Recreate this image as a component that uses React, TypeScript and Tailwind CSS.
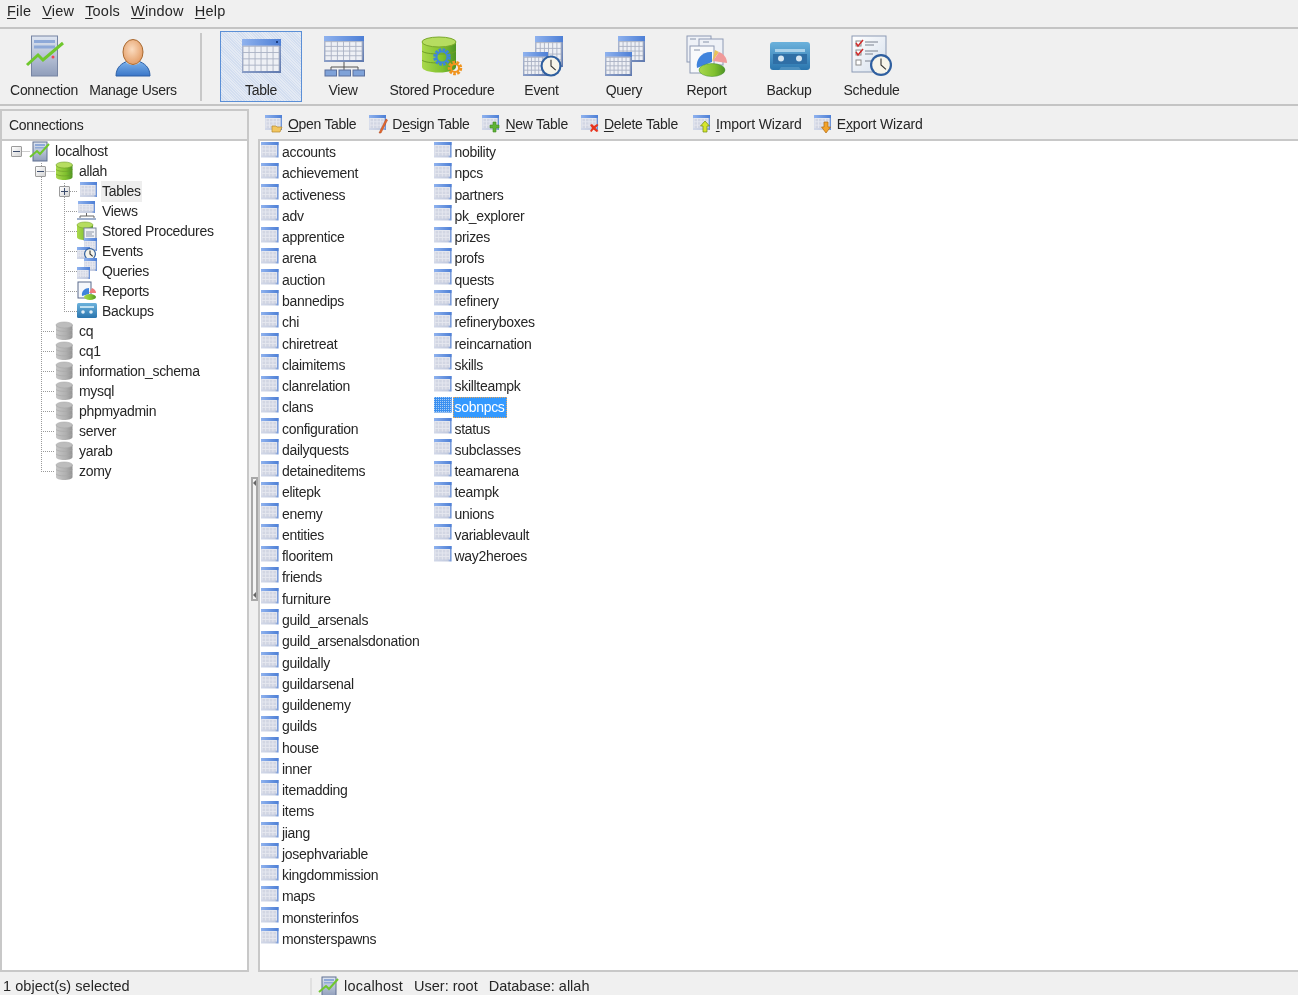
import React from "react";

const col1 = ["accounts","achievement","activeness","adv","apprentice","arena","auction","bannedips","chi","chiretreat","claimitems","clanrelation","clans","configuration","dailyquests","detaineditems","elitepk","enemy","entities","flooritem","friends","furniture","guild_arsenals","guild_arsenalsdonation","guildally","guildarsenal","guildenemy","guilds","house","inner","itemadding","items","jiang","josephvariable","kingdommission","maps","monsterinfos","monsterspawns"];
const col2 = ["nobility","npcs","partners","pk_explorer","prizes","profs","quests","refinery","refineryboxes","reincarnation","skills","skillteampk","sobnpcs","status","subclasses","teamarena","teampk","unions","variablevault","way2heroes"];

function Tbl({ x, y, w, h, light }: { x: number; y: number; w: number; h: number; light?: boolean }) {
  const head = Math.max(3, h * 0.2);
  const cols = light ? 4 : 6;
  const rows = light ? 3 : 4;
  const gx = (w - 3) / cols;
  const gy = (h - head - 2) / rows;
  const line = light ? "#e6e8f0" : "#aab1c4";
  return (
    <g>
      <rect x={x} y={y} width={w} height={h} fill={light ? "url(#edgeLight)" : "url(#edge)"} />
      <rect x={x} y={y} width={w} height={head} fill="url(#hdr)" />
      <rect x={x + 1} y={y + head} width={w - 3} height={h - head - 2} fill={light ? "#d2d6e3" : "#eef0f5"} />
      {Array.from({ length: cols + 1 }).map((_, i) => (
        <rect key={"c" + i} x={x + 1 + i * gx - 0.4} y={y + head} width={0.9} height={h - head - 2} fill={line} />
      ))}
      {Array.from({ length: rows }).map((_, i) => (
        <rect key={"r" + i} x={x + 1} y={y + head + i * gy} width={w - 3} height={0.9} fill={line} />
      ))}
    </g>
  );
}

function Clock({ cx, cy, r }: { cx: number; cy: number; r: number }) {
  return (
    <g>
      <circle cx={cx} cy={cy} r={r} fill="#2f5f9f" />
      <circle cx={cx} cy={cy} r={r * 0.8} fill="#f6f4ea" />
      <path d={`M${cx} ${cy - r * 0.6}V${cy}L${cx + r * 0.45} ${cy + r * 0.4}`} stroke="#333" strokeWidth={1.1} fill="none" />
    </g>
  );
}

function Chart({ d, w }: { d: string; w: number }) {
  return <path d={d} fill="none" stroke="#6fc72d" strokeWidth={w} strokeLinejoin="miter" />;
}

function ConnectionBig() {
  return (
    <svg width="44" height="44" viewBox="0 0 44 44">
      <rect x="9.500" y="1" width="26" height="40" fill="url(#tower)" stroke="#7684a2" />
      <rect x="12" y="5" width="21" height="3" fill="#8ea9d8" />
      <rect x="12" y="10.500" width="21" height="3" fill="#8ea9d8" />
      <circle cx="31" cy="22" r="1.500" fill="#ef4455" />
      <Chart d="M5 30L16 20L21 25L41 8" w={3} />
    </svg>
  );
}
function UserBig() {
  return (
    <svg width="44" height="44" viewBox="0 0 44 44">
      <path d="M5 41c0-9 6-13 12-15h10c6 2 12 6 12 15z" fill="url(#blue)" stroke="#2c5fa5" />
      <path d="M15 27c3 4 11 4 14 0l-2-2H17z" fill="#eef0f3" />
      <ellipse cx="22" cy="17" rx="10" ry="12.500" fill="url(#skin)" stroke="#a8682e" />
    </svg>
  );
}
function TableBig() {
  return (
    <svg width="44" height="44" viewBox="0 0 44 44">
      <Tbl x={3} y={4} w={39} h={34} />
      <rect x="37" y="6" width="2" height="2" fill="#1f3f7f" />
    </svg>
  );
}
function ViewBig() {
  return (
    <svg width="44" height="44" viewBox="0 0 44 44">
      <Tbl x={3} y={1} w={40} h={26} />
      <path d="M23 27V32M10 36V32H37V36M23 32V36" stroke="#555" fill="none" />
      {[4, 18, 32].map((x) => (
        <rect key={x} x={x} y={35} width={11.500} height={6} fill="#7fa2d8" stroke="#5a6f9c" />
      ))}
    </svg>
  );
}
function StoredBig() {
  return (
    <svg width="44" height="44" viewBox="0 0 44 44">
      <path d="M2 7v25c0 3 7 5.500 17 5.500s17-2.500 17-5.500V7z" fill="url(#green)" />
      <ellipse cx="19" cy="7" rx="17" ry="5" fill="#b6dd60" stroke="#7aa82c" />
      <path d="M2 16c3 4 31 4 34 0M2 25c3 4 31 4 34 0" stroke="#6f9f28" fill="none" />
      <circle cx="22" cy="22" r="7" fill="none" stroke="#3f86d8" strokeWidth="3.500" strokeDasharray="2.500 1.200" />
      <circle cx="22" cy="22" r="5.500" fill="none" stroke="#3f86d8" strokeWidth="2" />
      <circle cx="35" cy="33" r="5.500" fill="none" stroke="#f0941f" strokeWidth="3.500" strokeDasharray="2.500 1.300" />
      <circle cx="35" cy="33" r="4" fill="none" stroke="#f0941f" strokeWidth="2" />
    </svg>
  );
}
function EventBig() {
  return (
    <svg width="44" height="44" viewBox="0 0 44 44">
      <Tbl x={15} y={1} w={28} h={31} />
      <Tbl x={3} y={17} w={25} h={24} />
      <Clock cx={31} cy={31} r={10.500} />
    </svg>
  );
}
function QueryBig() {
  return (
    <svg width="44" height="44" viewBox="0 0 44 44">
      <Tbl x={16} y={1} w={27} h={26} />
      <Tbl x={3} y={17} w={27} h={24} />
    </svg>
  );
}
function ReportBig() {
  return (
    <svg width="44" height="44" viewBox="0 0 44 44">
      <rect x="2" y="1" width="24" height="26" fill="#eef1f7" stroke="#8e9ab4" />
      <rect x="14" y="4" width="24" height="26" fill="#eef1f7" stroke="#8e9ab4" />
      <rect x="5" y="11" width="24" height="27" fill="#f8f9fb" stroke="#8e9ab4" />
      <path d="M9 15h6M18 7h6M5 4h6" stroke="#8894aa" />
      <path d="M27 27L12 33c-2-9 6-17 15-16z" fill="#3f83dc" />
      <path d="M27 27L30 15l4 2z" fill="#e8c25a" />
      <path d="M28 26L34 17c5 2 8 6 8 11z" fill="#f09a9a" />
      <ellipse cx="27" cy="35" rx="13" ry="6.500" fill="url(#green)" stroke="#3e8d2b" strokeWidth="0.500" />
    </svg>
  );
}
function BackupBig() {
  return (
    <svg width="44" height="44" viewBox="0 0 44 44">
      <rect x="3" y="7" width="40" height="28" rx="3" fill="url(#tape)" />
      <rect x="8" y="14" width="30" height="3" fill="#a9d1ea" />
      <rect x="6" y="19" width="34" height="10" fill="#2f6fa6" />
      <circle cx="14" cy="23.500" r="3" fill="#d6e6f2" />
      <circle cx="32" cy="23.500" r="3" fill="#d6e6f2" />
      <path d="M12 35l2-3h18l2 3z" fill="#4d90bf" />
    </svg>
  );
}
function ScheduleBig() {
  return (
    <svg width="44" height="44" viewBox="0 0 44 44">
      <rect x="2" y="1" width="34" height="36" fill="url(#paper)" stroke="#8b9ab4" />
      <rect x="6" y="6" width="5" height="5" fill="#fff" stroke="#8c8c8c" />
      <rect x="6" y="15" width="5" height="5" fill="#fff" stroke="#8c8c8c" />
      <rect x="6" y="25" width="5" height="5" fill="#fff" stroke="#8c8c8c" />
      <path d="M6 8l2 3 5-6M6 17l2 3 5-6" stroke="#d12b2b" strokeWidth="1.500" fill="none" />
      <path d="M15 7h13M15 10h9M15 16h13M15 19h8M15 26h6" stroke="#7a8290" />
      <Clock cx={31} cy={30} r={11} />
    </svg>
  );
}

function SmallTable({ selected }: { selected?: boolean }) {
  return (
    <svg width="18" height="17" viewBox="0 0 18 17" className="shrink-0">
      <Tbl x={0} y={0} w={17.500} h={15.500} light />
      {selected && <rect x={0} y={0} width={17.500} height={15.500} fill="url(#dither)" />}
    </svg>
  );
}

function ActionIcon({ kind }: { kind: string }) {
  return (
    <svg width="19" height="20" viewBox="0 0 19 20" className="shrink-0">
      <Tbl x={0} y={1} w={17} h={15} light />
      {kind === "open" && <path d="M7 18v-6h4l1 1h5l-2 5z" fill="#f2c660" stroke="#b4862c" strokeWidth="0.700" />}
      {kind === "design" && <path d="M10 19L17 5l1.500 1L12 19z" fill="#ea6b2c" stroke="#a83d14" strokeWidth="0.500" />}
      {kind === "new" && <path d="M11 8h3v3h3v3h-3v4h-3v-4H8v-3h3z" fill="#5fb336" stroke="#3f8a22" strokeWidth="0.600" />}
      {kind === "delete" && <path d="M9 11l2-1 2 2 3-2 1.500 1-3 3 3 3-2 1-3-2.500-2 2.500-1.500-1 2-3z" fill="#e8341e" />}
      {kind === "import" && <path d="M12 7l4.500 5H14v6h-4v-6H7.500z" fill="#d7e62e" stroke="#6d8a12" strokeWidth="0.700" />}
      {kind === "export" && <path d="M7.500 13H10V8h4v5h2.500L12 19z" fill="#f2a32a" stroke="#b06a12" strokeWidth="0.700" />}
    </svg>
  );
}

function SmallConn() {
  return (
    <svg width="21" height="21" viewBox="0 0 21 21" className="shrink-0">
      <rect x="4" y="1" width="14" height="19" fill="url(#tower)" stroke="#5f6f90" />
      <rect x="6" y="3" width="10" height="2" fill="#8ea9d8" />
      <rect x="6" y="6" width="10" height="1.500" fill="#8ea9d8" />
      <Chart d="M1 16L8 10L11 13L20 3" w={2} />
    </svg>
  );
}
function Db({ grey }: { grey?: boolean }) {
  const fill = grey ? "url(#grey)" : "url(#green)";
  const top = grey ? "#bdbdbd" : "#b6dd60";
  const line = grey ? "#a8a8a8" : "#6f9f28";
  return (
    <svg width="19" height="20" viewBox="0 0 19 20" className="shrink-0">
      <path d="M1 4v12c0 2 3.500 3 8 3s8.500-1 8.500-3V4z" fill={fill} />
      <ellipse cx="9.250" cy="4" rx="8.250" ry="3" fill={top} stroke={line} strokeWidth="0.600" />
      <path d="M1 8.500c2 2.500 14.500 2.500 16.500 0M1 13c2 2.500 14.500 2.500 16.500 0" stroke={line} fill="none" strokeWidth="0.700" />
    </svg>
  );
}
function TreeIcon({ kind }: { kind: string }) {
  return (
    <svg width="20" height="20" viewBox="0 0 20 20" className="shrink-0 overflow-visible">
      {kind === "tables" && <Tbl x={1} y={1} w={17} h={15} light />}
      {kind === "views" && (
        <g>
          <Tbl x={1} y={0} w={17} h={12} light />
          <path d="M9.500 12v3M3 18v-3h14v3" stroke="#666" fill="none" />
          <rect x="0" y="17" width="19" height="2" fill="#9fb0cc" />
        </g>
      )}
      {kind === "procs" && (
        <g>
          <path d="M0 4v12c0 2 3 3 8 3s8-1 8-3V4z" fill="url(#green)" />
          <ellipse cx="8" cy="4" rx="8" ry="3" fill="#b6dd60" stroke="#7aa82c" strokeWidth="0.600" />
          <rect x="7" y="7" width="12" height="12" fill="#f0f2f6" stroke="#7b869c" />
          <path d="M9 11h8M9 13h6M9 15h8" stroke="#9099a8" />
        </g>
      )}
      {kind === "events" && (
        <g>
          <Tbl x={7} y={-3} w={13} h={13} light />
          <Tbl x={0} y={6} w={13} h={12} light />
          <Clock cx={13} cy={13} r={6} />
        </g>
      )}
      {kind === "queries" && (
        <g>
          <Tbl x={7} y={-3} w={13} h={13} light />
          <Tbl x={0} y={6} w={13} h={12} light />
        </g>
      )}
      {kind === "reports" && (
        <g>
          <rect x="1" y="1" width="13" height="16" fill="#f5f7fb" stroke="#5a6b8c" />
          <path d="M12 13L5 15c-1-5 3-8 7-8z" fill="#3f83dc" />
          <path d="M12 12l3-5c3 1 4 3 4 5z" fill="#ef7b7b" />
          <ellipse cx="13" cy="16" rx="6" ry="3" fill="url(#green)" />
        </g>
      )}
      {kind === "backups" && (
        <g>
          <rect x="0" y="2" width="20" height="15" rx="1.500" fill="url(#tape)" />
          <rect x="3" y="5" width="14" height="2" fill="#bfe0f2" />
          <circle cx="6" cy="11" r="1.800" fill="#e0eef7" />
          <circle cx="14" cy="11" r="1.800" fill="#e0eef7" />
        </g>
      )}
    </svg>
  );
}

function Expander({ open }: { open?: boolean }) {
  return (
    <span className="relative flex h-[11px] w-[11px] shrink-0 items-center justify-center rounded-[1px] border border-[#9b9b9b] bg-gradient-to-br from-white to-[#d5d5d5]">
      <span className="h-px w-[7px] bg-[#3c4c6c]" />
      {!open && <span className="absolute h-[7px] w-px bg-[#3c4c6c]" />}
    </span>
  );
}

function TreeGuides() {
  const h1 = [331, 351, 371, 391, 411, 431, 451, 471];
  const h2 = [191, 211, 231, 251, 271, 291, 311];
  const st = { stroke: "#9a9a9a", strokeDasharray: "1 1", fill: "none" };
  return (
    <svg className="pointer-events-none absolute left-0 top-0" width="100" height="480" viewBox="2 141 100 480">
      <path d="M22.500 151.500H30M46.500 171.500H55M41.500 163V471.500" {...st} />
      <path d="M64.500 183V311.500" {...st} />
      {h1.map((y) => <path key={y} d={`M41 ${y + 0.5}H55`} {...st} />)}
      {h2.map((y) => <path key={y} d={`M${y === 191 ? 70 : 64} ${y + 0.5}H78`} {...st} />)}
    </svg>
  );
}

function Mn({ pre = "", u, post }: { pre?: string; u: string; post: string }) {
  return <span>{pre}<span className="underline underline-offset-[2px] decoration-1">{u}</span>{post}</span>;
}

function ToolItem({ w, label, icon, active }: { w: string; label: string; icon: React.ReactNode; active?: boolean }) {
  return (
    <div className={`flex h-[71px] shrink-0 flex-col items-center ${w} ${active ? "border border-[#5b8fd6] bg-[repeating-linear-gradient(45deg,#d3def0_0,#d3def0_1px,#e4eaf4_1px,#e4eaf4_2px)]" : ""}`}>
      <div className={`flex h-[48px] items-end ${active ? "mt-[-1px]" : ""}`}>{icon}</div>
      <div className="mt-[1px] whitespace-nowrap">{label}</div>
    </div>
  );
}

function TreeRow({ indent, expander, icon, children, hl }: { indent: string; expander?: React.ReactNode; icon: React.ReactNode; children: React.ReactNode; hl?: boolean }) {
  return (
    <div className={`flex h-[20px] items-center ${indent}`}>
      {expander}
      {icon}
      <span className={`whitespace-nowrap px-[1px] ${hl ? "ml-[2px] bg-[#eeeeee]" : "ml-[4px]"}`}>{children}</span>
    </div>
  );
}

const dbs = ["cq", "cq1", "information_schema", "mysql", "phpmyadmin", "server", "yarab", "zomy"];
const subs: [string, string][] = [["views", "Views"], ["procs", "Stored Procedures"], ["events", "Events"], ["queries", "Queries"], ["reports", "Reports"], ["backups", "Backups"]];
const actions: [string, string, string, string, string][] = [
  ["open", "", "O", "pen Table", ""],
  ["design", "D", "e", "sign Table", ""],
  ["new", "", "N", "ew Table", ""],
  ["delete", "", "D", "elete Table", ""],
  ["import", "", "I", "mport Wizard", "ml-[2px] tracking-[-0.1px]"],
  ["export", "E", "x", "port Wizard", "-ml-[1px] tracking-[-0.15px]"],
];

function Row({ name }: { name: string }) {
  const sel = name === "sobnpcs";
  return (
    <div className="flex h-[21.27px] items-center">
      <div className="-mt-[5px]"><SmallTable selected={sel} /></div>
      <span className={`ml-[1px] whitespace-nowrap ${sel ? "border border-dotted border-[#e8a65a] bg-[#3399ff] px-[1px] leading-[19px] text-white" : "px-[2px]"}`}>{name}</span>
    </div>
  );
}

export default function App() {
  return (
    <div className="relative flex h-[995px] w-[1298px] flex-col overflow-hidden bg-[#f0f0f0] text-[14px] tracking-[-0.3px] text-[#262626] blur-[0.5px] [font-family:'Liberation_Sans',sans-serif]">
      <svg width="0" height="0" className="absolute">
        <defs>
          <linearGradient id="hdr" x1="0" y1="0" x2="1" y2="0"><stop offset="0" stopColor="#8fb2ee" /><stop offset="1" stopColor="#4d7fd6" /></linearGradient>
          <linearGradient id="edge" x1="0" y1="0" x2="1" y2="1"><stop offset="0" stopColor="#b5c2de" /><stop offset="1" stopColor="#5e78ae" /></linearGradient>
          <linearGradient id="edgeLight" x1="0" y1="0" x2="1" y2="0"><stop offset="0" stopColor="#d2d8e8" /><stop offset="0.8" stopColor="#c2cade" /><stop offset="1" stopColor="#5f8ad6" /></linearGradient>
          <linearGradient id="tower" x1="0" y1="0" x2="0" y2="1"><stop offset="0" stopColor="#dfe6f2" /><stop offset="1" stopColor="#8f9dba" /></linearGradient>
          <linearGradient id="blue" x1="0" y1="0" x2="0" y2="1"><stop offset="0" stopColor="#7fb4ec" /><stop offset="1" stopColor="#3a76c8" /></linearGradient>
          <radialGradient id="skin" cx="0.45" cy="0.4" r="0.7"><stop offset="0" stopColor="#fbdcc0" /><stop offset="1" stopColor="#e09358" /></radialGradient>
          <linearGradient id="green" x1="0" y1="0" x2="1" y2="0"><stop offset="0" stopColor="#a9d84c" /><stop offset="0.6" stopColor="#7fc02e" /><stop offset="1" stopColor="#4f9424" /></linearGradient>
          <linearGradient id="grey" x1="0" y1="0" x2="1" y2="0"><stop offset="0" stopColor="#c6c6c6" /><stop offset="0.6" stopColor="#b0b0b0" /><stop offset="1" stopColor="#939393" /></linearGradient>
          <linearGradient id="tape" x1="0" y1="0" x2="0" y2="1"><stop offset="0" stopColor="#6cb2dc" /><stop offset="1" stopColor="#2a75ae" /></linearGradient>
          <linearGradient id="paper" x1="0" y1="0" x2="1" y2="1"><stop offset="0" stopColor="#ffffff" /><stop offset="1" stopColor="#d5dfec" /></linearGradient>
          <pattern id="dither" width="2" height="2" patternUnits="userSpaceOnUse"><rect width="2" height="2" fill="#3a8ff0" /><rect width="1" height="1" fill="#a8cdf5" /></pattern>
        </defs>
      </svg>

      {/* menu */}
      <div className="flex h-[29px] shrink-0 items-start gap-[11px] border-b-2 border-[#c4c4c4] pl-[7px] pt-[1px] text-[14.5px] tracking-[0.2px]">
        <Mn u="F" post="ile" />
        <Mn u="V" post="iew" />
        <Mn u="T" post="ools" />
        <Mn u="W" post="indow" />
        <Mn u="H" post="elp" />
      </div>

      {/* big toolbar */}
      <div className="flex h-[77px] shrink-0 items-start border-b-2 border-[#c4c4c4] pl-[3px] pt-[2px]">
        <ToolItem w="w-[82px]" label="Connection" icon={<ConnectionBig />} />
        <ToolItem w="w-[96px]" label="Manage Users" icon={<UserBig />} />
        <div className="ml-[19px] mr-[18px] mt-[2px] h-[68px] w-[2px] bg-[#c8c8c8]" />
        <ToolItem w="w-[82px]" label="Table" icon={<TableBig />} active />
        <ToolItem w="w-[82px]" label="View" icon={<ViewBig />} />
        <ToolItem w="w-[116px]" label="Stored Procedure" icon={<StoredBig />} />
        <ToolItem w="w-[83px]" label="Event" icon={<EventBig />} />
        <ToolItem w="w-[82px]" label="Query" icon={<QueryBig />} />
        <ToolItem w="w-[83px]" label="Report" icon={<ReportBig />} />
        <ToolItem w="w-[82px]" label="Backup" icon={<BackupBig />} />
        <ToolItem w="w-[83px]" label="Schedule" icon={<ScheduleBig />} />
      </div>

      {/* body */}
      <div className="flex min-h-0 flex-1">
        {/* left */}
        <div className="flex w-[249px] shrink-0 flex-col pt-[3px]">
          <div className="flex h-[30px] shrink-0 items-center border-2 border-b-0 border-[#c8c8c8] pl-[7px]">Connections</div>
          <div className="relative flex-1 border-2 border-[#c8c8c8] bg-white">
            <TreeGuides />
            <TreeRow indent="pl-[9px]" expander={<Expander open />} icon={<span className="ml-[7px]"><SmallConn /></span>}>localhost</TreeRow>
            <TreeRow indent="pl-[33px]" expander={<Expander open />} icon={<span className="ml-[9px]"><Db /></span>}>allah</TreeRow>
            <TreeRow indent="pl-[57px]" expander={<Expander />} icon={<span className="ml-[9px]"><TreeIcon kind="tables" /></span>} hl>Tables</TreeRow>
            {subs.map(([k, l]) => (
              <TreeRow key={k} indent="pl-[75px]" icon={<TreeIcon kind={k} />}>{l}</TreeRow>
            ))}
            {dbs.map((d) => (
              <TreeRow key={d} indent="pl-[53px]" icon={<Db grey />}>{d}</TreeRow>
            ))}
          </div>
        </div>

        {/* splitter */}
        <div className="flex w-[9px] shrink-0 items-center justify-center pl-[1px]">
          <div className="relative flex h-[124px] w-[7px] flex-col justify-between border-2 border-[#a8a8a8] bg-[#f4f4f4] py-[1px]">
            <span className="h-0 w-0 border-y-[3px] border-r-[3px] border-y-transparent border-r-[#666]" />
            <span className="h-0 w-0 border-y-[3px] border-r-[3px] border-y-transparent border-r-[#666]" />
          </div>
        </div>

        {/* right */}
        <div className="flex min-w-0 flex-1 flex-col">
          <div className="flex h-[33px] shrink-0 items-center gap-[13px] pl-[7px] pt-[3px]">
            {actions.map(([k, pre, u, post, cls]) => (
              <div key={k} className={`flex items-center gap-[4px] ${cls}`}>
                <ActionIcon kind={k} />
                <Mn pre={pre} u={u} post={post} />
              </div>
            ))}
          </div>
          <div className="flex flex-1 border-2 border-r-0 border-[#c8c8c8] bg-white pl-[1px] pt-[1px]">
            <div className="w-[172.5px] shrink-0">
              {col1.map((n) => <Row key={n} name={n} />)}
            </div>
            <div>
              {col2.map((n) => <Row key={n} name={n} />)}
            </div>
          </div>
        </div>
      </div>

      {/* status */}
      <div className="flex h-[23px] shrink-0 items-center pt-[6px] text-[14.5px] tracking-[0.05px]">
        <div className="w-[312px] shrink-0 self-stretch border-r-2 border-[#e0e0e0] pl-[3px] leading-[17px]">1 object(s) selected</div>
        <div className="flex items-center pl-[6px] tracking-[0px]">
          <SmallConn />
          <span className="ml-[5px] tracking-[0.2px]">localhost</span>
          <span className="ml-[11px]">User: root</span>
          <span className="ml-[11px]">Database: allah</span>
        </div>
      </div>
    </div>
  );
}
